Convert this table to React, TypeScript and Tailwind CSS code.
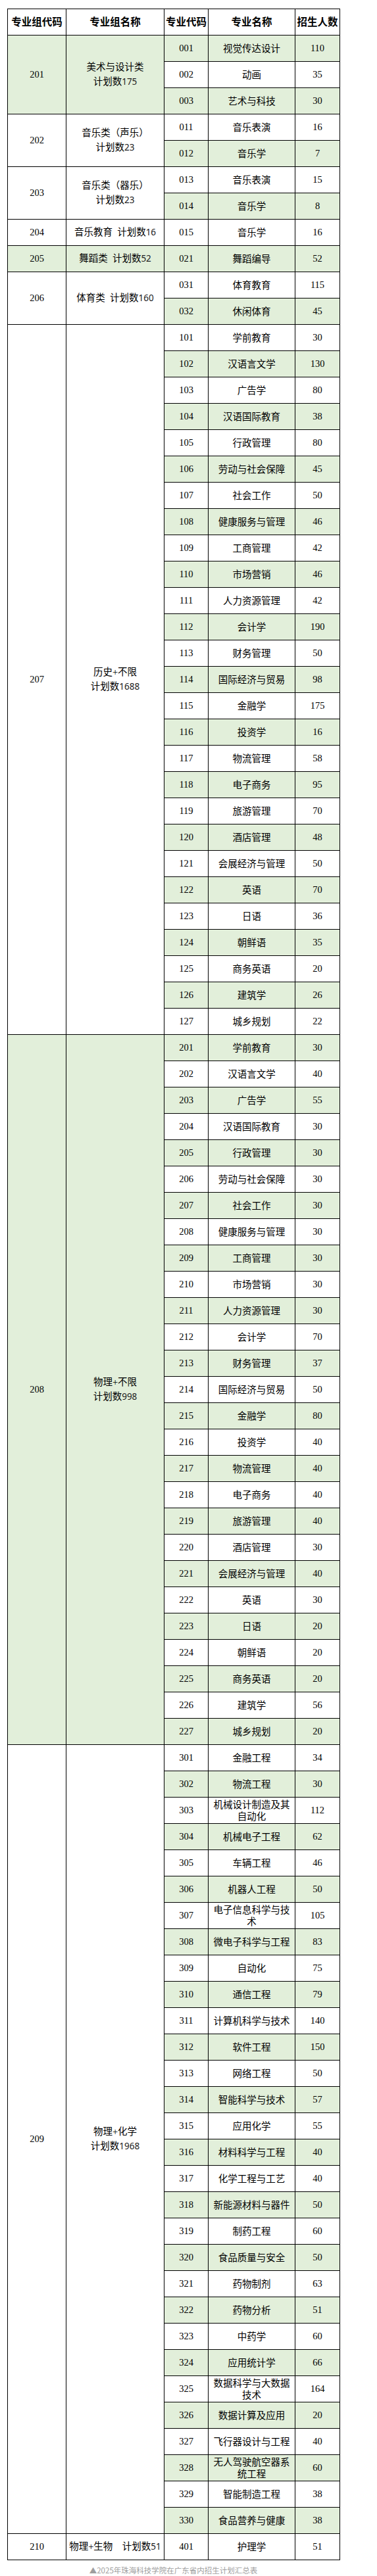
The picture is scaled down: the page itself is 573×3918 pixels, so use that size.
type Major = { code: string; name: string; count: number };

type Group = {
  code: string;
  // each entry is one line in the cell; a [text, digits] pair renders the digits in a sans face
  label: [string, string][];
  green: boolean;
  majors: Major[];
};

const m = (code: string, name: string, count: number): Major => ({ code, name, count });

const groups: Group[] = [
  {
    code: '201',
    label: [['美术与设计类', ''], ['计划数', '175']],
    green: true,
    majors: [m('001', '视觉传达设计', 110), m('002', '动画', 35), m('003', '艺术与科技', 30)],
  },
  {
    code: '202',
    label: [['音乐类（声乐）', ''], ['计划数', '23']],
    green: false,
    majors: [m('011', '音乐表演', 16), m('012', '音乐学', 7)],
  },
  {
    code: '203',
    label: [['音乐类（器乐）', ''], ['计划数', '23']],
    green: false,
    majors: [m('013', '音乐表演', 15), m('014', '音乐学', 8)],
  },
  {
    code: '204',
    label: [['音乐教育  计划数', '16']],
    green: false,
    majors: [m('015', '音乐学', 16)],
  },
  {
    code: '205',
    label: [['舞蹈类  计划数', '52']],
    green: true,
    majors: [m('021', '舞蹈编导', 52)],
  },
  {
    code: '206',
    label: [['体育类  计划数', '160']],
    green: false,
    majors: [m('031', '体育教育', 115), m('032', '休闲体育', 45)],
  },
  {
    code: '207',
    label: [['历史+不限', ''], ['计划数', '1688']],
    green: false,
    majors: [
      m('101', '学前教育', 30),
      m('102', '汉语言文学', 130),
      m('103', '广告学', 80),
      m('104', '汉语国际教育', 38),
      m('105', '行政管理', 80),
      m('106', '劳动与社会保障', 45),
      m('107', '社会工作', 50),
      m('108', '健康服务与管理', 46),
      m('109', '工商管理', 42),
      m('110', '市场营销', 46),
      m('111', '人力资源管理', 42),
      m('112', '会计学', 190),
      m('113', '财务管理', 50),
      m('114', '国际经济与贸易', 98),
      m('115', '金融学', 175),
      m('116', '投资学', 16),
      m('117', '物流管理', 58),
      m('118', '电子商务', 95),
      m('119', '旅游管理', 70),
      m('120', '酒店管理', 48),
      m('121', '会展经济与管理', 50),
      m('122', '英语', 70),
      m('123', '日语', 36),
      m('124', '朝鲜语', 35),
      m('125', '商务英语', 20),
      m('126', '建筑学', 26),
      m('127', '城乡规划', 22),
    ],
  },
  {
    code: '208',
    label: [['物理+不限', ''], ['计划数', '998']],
    green: true,
    majors: [
      m('201', '学前教育', 30),
      m('202', '汉语言文学', 40),
      m('203', '广告学', 55),
      m('204', '汉语国际教育', 30),
      m('205', '行政管理', 30),
      m('206', '劳动与社会保障', 30),
      m('207', '社会工作', 30),
      m('208', '健康服务与管理', 30),
      m('209', '工商管理', 30),
      m('210', '市场营销', 30),
      m('211', '人力资源管理', 30),
      m('212', '会计学', 70),
      m('213', '财务管理', 37),
      m('214', '国际经济与贸易', 50),
      m('215', '金融学', 80),
      m('216', '投资学', 40),
      m('217', '物流管理', 40),
      m('218', '电子商务', 40),
      m('219', '旅游管理', 40),
      m('220', '酒店管理', 30),
      m('221', '会展经济与管理', 40),
      m('222', '英语', 30),
      m('223', '日语', 20),
      m('224', '朝鲜语', 20),
      m('225', '商务英语', 20),
      m('226', '建筑学', 56),
      m('227', '城乡规划', 20),
    ],
  },
  {
    code: '209',
    label: [['物理+化学', ''], ['计划数', '1968']],
    green: false,
    majors: [
      m('301', '金融工程', 34),
      m('302', '物流工程', 30),
      m('303', '机械设计制造及其自动化', 112),
      m('304', '机械电子工程', 62),
      m('305', '车辆工程', 46),
      m('306', '机器人工程', 50),
      m('307', '电子信息科学与技术', 105),
      m('308', '微电子科学与工程', 83),
      m('309', '自动化', 75),
      m('310', '通信工程', 79),
      m('311', '计算机科学与技术', 140),
      m('312', '软件工程', 150),
      m('313', '网络工程', 50),
      m('314', '智能科学与技术', 57),
      m('315', '应用化学', 55),
      m('316', '材料科学与工程', 40),
      m('317', '化学工程与工艺', 40),
      m('318', '新能源材料与器件', 50),
      m('319', '制药工程', 60),
      m('320', '食品质量与安全', 50),
      m('321', '药物制剂', 63),
      m('322', '药物分析', 51),
      m('323', '中药学', 60),
      m('324', '应用统计学', 66),
      m('325', '数据科学与大数据技术', 164),
      m('326', '数据计算及应用', 20),
      m('327', '飞行器设计与工程', 40),
      m('328', '无人驾驶航空器系统工程', 60),
      m('329', '智能制造工程', 38),
      m('330', '食品营养与健康', 38),
    ],
  },
  {
    code: '210',
    label: [['物理+生物\u3000计划数', '51']],
    green: false,
    majors: [m('401', '护理学', 51)],
  },
];

const headers = ['专业组代码', '专业组名称', '专业代码', '专业名称', '招生人数'];

const cell = 'border border-black text-center align-middle px-1';

export default function App() {
  let rowIndex = 0;

  return (
    <div className="min-h-screen bg-white pt-[13px] font-['Liberation_Serif','Noto_Sans_CJK_SC',serif] text-black">
      <div className="ml-[11px] w-[505px]">
        <table className="w-[505px] table-fixed border-collapse text-[14.5px]">
          <colgroup>
            <col className="w-[89px]" />
            <col className="w-[149px]" />
            <col className="w-[67px]" />
            <col className="w-[132px]" />
            <col className="w-[68px]" />
          </colgroup>
          <thead>
            <tr className="h-[40px]">
              {headers.map((h) => (
                <th
                  key={h}
                  className="border border-black px-0 text-center align-middle text-[15.5px] font-bold whitespace-nowrap"
                >
                  {h}
                </th>
              ))}
            </tr>
          </thead>
          <tbody>
            {groups.map((g) =>
              g.majors.map((mj, i) => {
                const stripe = rowIndex % 2 === 0 ? 'bg-[#e2efda]' : 'bg-white';
                rowIndex += 1;
                const groupBg = g.green ? 'bg-[#e2efda]' : 'bg-white';
                return (
                  <tr key={g.code + mj.code} className="h-[40px]">
                    {i === 0 && (
                      <>
                        <td rowSpan={g.majors.length} className={`${cell} ${groupBg}`}>
                          {g.code}
                        </td>
                        <td
                          rowSpan={g.majors.length}
                          className={`${cell} ${groupBg} leading-[21.5px] whitespace-pre`}
                        >
                          {g.label.map(([text, digits], li) => (
                            <div key={li}>
                              {text}
                              {digits && (
                                <span className="font-['Noto_Sans',sans-serif] text-[13.5px] text-[#222]">
                                  {digits}
                                </span>
                              )}
                            </div>
                          ))}
                        </td>
                      </>
                    )}
                    <td className={`${cell} ${stripe}`}>{mj.code}</td>
                    <td className={`${cell} ${stripe} leading-[18px]`}>{mj.name}</td>
                    <td className={`${cell} ${stripe}`}>{mj.count}</td>
                  </tr>
                );
              })
            )}
          </tbody>
        </table>
        <p className="mt-[7px] text-center text-[11.5px] leading-[16px] text-[#9e9e9e] font-['Noto_Sans_CJK_SC',sans-serif]">
          ▲2025年珠海科技学院在广东省内招生计划汇总表
        </p>
      </div>
    </div>
  );
}
